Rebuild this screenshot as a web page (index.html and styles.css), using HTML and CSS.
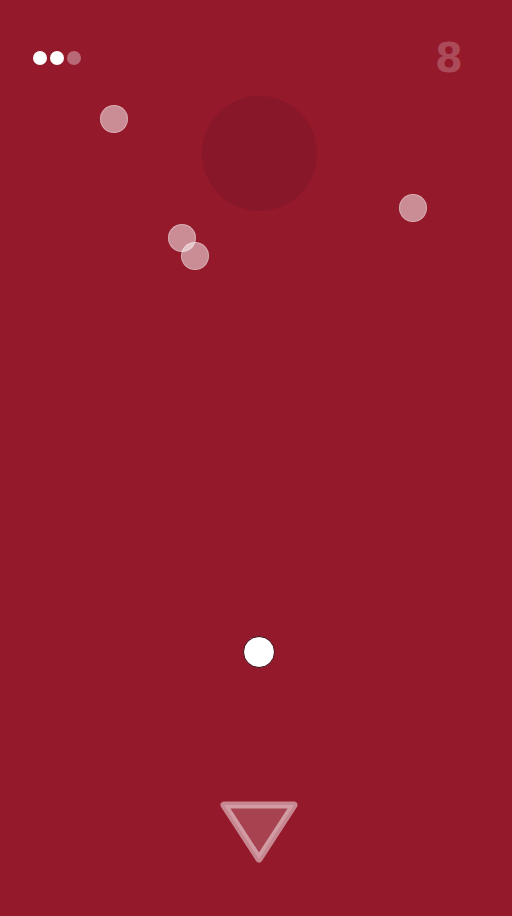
FILE: index.html
```html
<!DOCTYPE html>
<html>
<head>
<meta charset="utf-8">
<link rel="stylesheet" href="styles.css">
</head>
<body>
<div class="game">
  <div class="lives">
    <span class="life"></span>
    <span class="life"></span>
    <span class="life lost"></span>
  </div>
  <div class="score">8</div>
  <div class="hole" style="left:202px;top:96px;"></div>
  <div class="orb" style="left:100px;top:105px;"></div>
  <div class="orb" style="left:168px;top:224px;"></div>
  <div class="orb" style="left:181px;top:242px;"></div>
  <div class="orb" style="left:399px;top:194px;"></div>
  <div class="ball"></div>
  <svg class="drop" width="84" height="68" viewBox="0 0 84 68">
    <path d="M7 6 L77 6 L42 60 Z" fill="rgba(255,255,255,0.18)" stroke="rgba(255,255,255,0.48)" stroke-width="7" stroke-linejoin="round"/>
  </svg>
</div>
</body>
</html>
```
FILE: styles.css
```css
html, body {
  margin: 0;
  padding: 0;
  background: #94192b;
}
.game {
  position: relative;
  width: 512px;
  height: 916px;
  overflow: hidden;
  background: #94192b;
  font-family: "DejaVu Sans", sans-serif;
}
.lives {
  position: absolute;
  left: 33px;
  top: 51px;
  display: flex;
  gap: 3px;
}
.life {
  width: 14px;
  height: 14px;
  border-radius: 50%;
  background: #ffffff;
}
.life.lost {
  background: rgba(255,255,255,0.35);
}
.score {
  position: absolute;
  left: 432px;
  top: 34px;
  width: 34px;
  text-align: center;
  font-size: 40px;
  font-weight: bold;
  line-height: 48px;
  color: rgba(255,255,255,0.22);
}
.hole {
  position: absolute;
  width: 115px;
  height: 115px;
  border-radius: 50%;
  background: #88172a;
}
.orb {
  position: absolute;
  width: 28px;
  height: 28px;
  box-sizing: border-box;
  border-radius: 50%;
  background: rgba(255,255,255,0.5);
  border: 1px solid rgba(255,255,255,0.3);
}
.ball {
  position: absolute;
  left: 243px;
  top: 636px;
  width: 32px;
  height: 32px;
  box-sizing: border-box;
  border-radius: 50%;
  background: #ffffff;
  border: 1px solid #3a0a12;
}
.drop {
  position: absolute;
  left: 217px;
  top: 799px;
}
```
